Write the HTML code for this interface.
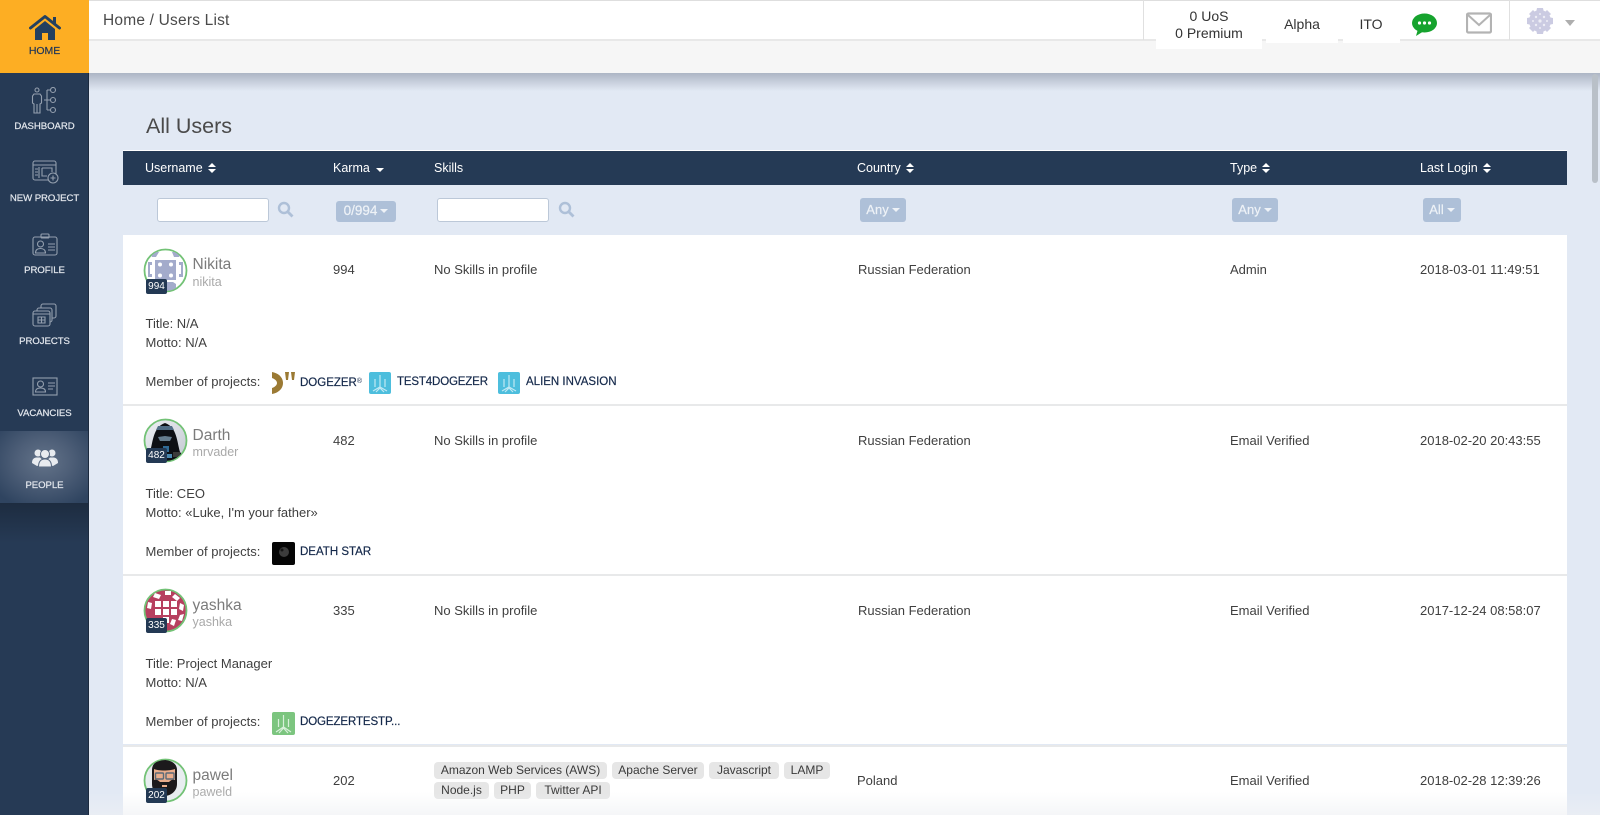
<!DOCTYPE html>
<html lang="en"><head><meta charset="utf-8"><title>Users List</title>
<style>
html,body{margin:0;padding:0;width:1600px;height:815px;overflow:hidden;background:#e2e9f4;font-family:"Liberation Sans",sans-serif;color:#3f3f3f;font-size:13px}
.a{position:absolute}
.t{position:absolute;white-space:nowrap;line-height:16px}
.l{position:absolute;left:0;width:89px;text-align:center;font-size:9.6px;line-height:12px;color:#e4e8ee;letter-spacing:-.05px;white-space:nowrap;-webkit-text-stroke:.2px #e4e8ee}
.th{position:absolute;top:160px;color:#fff;font-size:12.5px;line-height:16px;white-space:nowrap}
.sort{display:inline-block;vertical-align:-1px;margin-left:5px;width:8px;height:10px}
.row{position:absolute;left:123px;width:1444px;height:168px;background:#fff}
.sep{position:absolute;left:123px;width:1444px;height:2px;background:#e8e9ea}
.inp{position:absolute;top:198px;width:110px;height:22px;background:#fff;border:1px solid #bcc8d8;border-radius:3px}
.dd{position:absolute;background:#aec0d8;border-radius:3px;color:#eef2f7;font-size:13px;line-height:23px;text-align:center;height:24px;top:198px;-webkit-text-stroke:.2px #eef2f7}
.dd i{display:inline-block;width:0;height:0;border:4px solid transparent;border-top-color:#eef2f7;border-bottom:0;vertical-align:2px;margin-left:3px}
.tag{position:absolute;height:17px;background:#e6e6e6;border-radius:4px;font-size:12px;line-height:17px;text-align:center;color:#3a3a3a;white-space:nowrap}
.nm{position:absolute;left:192.500px;font-size:15.5px;line-height:18px;color:#7b7b7b;white-space:nowrap}
.un{position:absolute;left:192.500px;font-size:12.5px;line-height:14px;color:#a9a9a9;white-space:nowrap}
.bd{position:absolute;z-index:3;left:146px;width:21px;height:15px;background:#233954;border-radius:2px;color:#fff;font-size:10px;line-height:15px;text-align:center}
.pn{position:absolute;color:#14284a;font-size:11.5px;line-height:16px;white-space:nowrap;-webkit-text-stroke:.2px #14284a}
.av{z-index:2}
</style></head><body>

<!-- top -->
<div class="a" style="left:89px;top:0;width:1511px;height:73px;background:#f6f6f6"></div>
<div class="a" style="left:89px;top:0;width:1511px;height:41px;background:#fff;border-top:1px solid #dedede;border-bottom:2px solid #e8e8e8;box-sizing:border-box"></div>
<div class="t" style="left:103px;top:13px;font-size:15.500px;color:#4a4a4a;letter-spacing:.2px">Home&nbsp;/&nbsp;Users List</div>
<div class="a" style="left:1143px;top:0;width:1px;height:40px;background:#e0e0e0"></div>
<div class="a" style="left:1509px;top:0;width:1px;height:40px;background:#e0e0e0"></div>
<div class="a" style="left:1156px;top:38px;width:106px;height:11px;background:#fff"></div>
<div class="a" style="left:1266px;top:38px;width:72px;height:5px;background:#fff"></div>
<div class="a" style="left:1343px;top:38px;width:57px;height:5px;background:#fff"></div>
<div class="t" style="left:1144px;width:130px;text-align:center;top:8px;font-size:14px;color:#333">0 UoS</div>
<div class="t" style="left:1144px;width:130px;text-align:center;top:25px;font-size:14px;color:#333">0 Premium</div>
<div class="t" style="left:1262px;width:80px;text-align:center;top:16px;font-size:14px;color:#333">Alpha</div>
<div class="t" style="left:1341px;width:60px;text-align:center;top:16px;font-size:14px;color:#333">ITO</div>
<svg class="a" style="left:1411px;top:13px" width="27" height="24" viewBox="0 0 27 24"><ellipse cx="13.5" cy="10" rx="12.5" ry="9.5" fill="#16a32e"/><path d="M7 16L5 23L13 18Z" fill="#16a32e"/><circle cx="8.5" cy="10" r="1.6" fill="#fff"/><circle cx="13.5" cy="10" r="1.6" fill="#fff"/><circle cx="18.5" cy="10" r="1.6" fill="#fff"/></svg>
<svg class="a" style="left:1466px;top:12px" width="26" height="22" viewBox="0 0 26 22"><rect x="1" y="1.500" width="24" height="19" rx="1.5" fill="#fff" stroke="#b3b3b3" stroke-width="2.200"/><path d="M2 3L13 13L24 3" fill="none" stroke="#b3b3b3" stroke-width="2"/></svg>
<svg class="a" style="left:1526px;top:7px" width="28" height="28" viewBox="0 0 28 28"><g fill="#cbcbe2"><circle cx="14" cy="14" r="11"/><path d="M11 1h6l1 5h-8z"/><path d="M11 27h6l1-5h-8z"/><path d="M1 11v6l5 1v-8z"/><path d="M27 11v6l-5 1v-8z"/><path d="M3 7l4-4 4 4-4 4z"/><path d="M25 7l-4-4-4 4 4 4z"/><path d="M3 21l4 4 4-4-4-4z"/><path d="M25 21l-4 4-4-4 4-4z"/></g><g fill="#eeeef6"><circle cx="10" cy="10" r="1.200"/><circle cx="18" cy="10" r="1.200"/><circle cx="10" cy="18" r="1.200"/><circle cx="18" cy="18" r="1.200"/><circle cx="14" cy="14" r="1.600"/><circle cx="14" cy="7" r="1"/><circle cx="14" cy="21" r="1"/><circle cx="7" cy="14" r="1"/><circle cx="21" cy="14" r="1"/></g></svg>
<div class="a" style="left:1565px;top:20px;width:0;height:0;border:5px solid transparent;border-top:6px solid #aeaeae;border-bottom:0"></div>

<!-- sidebar -->
<div class="a" style="left:0;top:73px;width:89px;height:742px;background:#263a55;border-right:1px solid #1c2a3e;box-sizing:border-box"></div>
<div class="a" style="left:0;top:0;width:89px;height:73px;background:#fdae23"></div>
<svg class="a" style="left:29px;top:14px" width="32" height="27" viewBox="0 0 32 27"><path d="M1.5 14L16 2.5L30.500 14" fill="none" stroke="#24405f" stroke-width="3" stroke-linecap="round" stroke-linejoin="round"/><path d="M24 3h3v7l-3-2.500z" fill="#24405f"/><path d="M6 15L16 7l10 8v11h-7v-7h-6v7H6z" fill="#24405f"/></svg>
<div class="l" style="top:45px;color:#1f3557;font-size:10.5px;-webkit-text-stroke:.2px #1f3557">HOME</div>

<svg class="a" style="left:31px;top:87px" width="28" height="28" viewBox="0 0 28 28" fill="none" stroke="#949fae" stroke-width="1.100"><circle cx="6" cy="3" r="2"/><path d="M3 7h6l1.500 2v7l-1.500 1v9H3v-9l-1.500-1V9z"/><path d="M6 17v9"/><path d="M13 13h3M16 3v20M16 3h3M16 13h3M16 23h3"/><circle cx="22" cy="3" r="2.500"/><circle cx="22" cy="13" r="2.500"/><circle cx="22" cy="23" r="2.500"/></svg>
<div class="l" style="top:121px">DASHBOARD</div>

<svg class="a" style="left:32px;top:159px" width="28" height="26" viewBox="0 0 28 26" fill="none" stroke="#949fae" stroke-width="1.100"><rect x="1" y="2" width="23" height="19" rx="2"/><path d="M1 6h23M7 8v11M3 10h3M3 13h3M3 16h3M10 9h10v4M10 9v8h5"/><circle cx="21" cy="19" r="5" fill="#263a55"/><path d="M21 16.500v5M18.500 19h5"/></svg>
<div class="l" style="top:193px">NEW PROJECT</div>

<svg class="a" style="left:32px;top:233px" width="26" height="24" viewBox="0 0 26 24" fill="none" stroke="#949fae" stroke-width="1.100"><rect x="1" y="4" width="24" height="18" rx="2"/><rect x="9" y="1" width="8" height="4" rx="1"/><circle cx="8.500" cy="11" r="3"/><path d="M3.500 20c0-3 2-4.500 5-4.500s5 1.500 5 4.500z"/><path d="M16 11h7M16 14h7M16 17h7"/></svg>
<div class="l" style="top:265px">PROFILE</div>

<svg class="a" style="left:32px;top:302px" width="26" height="26" viewBox="0 0 26 26" fill="none" stroke="#949fae" stroke-width="1.100"><rect x="9" y="2" width="15" height="14" rx="2"/><rect x="5" y="6" width="15" height="14" rx="2" fill="#263a55"/><rect x="1" y="9" width="17" height="15" rx="2" fill="#263a55"/><path d="M1 12h17M6 15h7v6H6zM9.500 15v6M6 18h7"/></svg>
<div class="l" style="top:336px">PROJECTS</div>

<svg class="a" style="left:32px;top:377px" width="26" height="20" viewBox="0 0 26 20" fill="none" stroke="#949fae" stroke-width="1.100"><rect x="1" y="1" width="24" height="17"/><circle cx="8.500" cy="7" r="3"/><path d="M3.500 15c0-3 2-4 5-4s5 1 5 4z"/><path d="M16 6h7M16 9h7M16 12h5"/></svg>
<div class="l" style="top:408px">VACANCIES</div>

<div class="a" style="left:0;top:431px;width:88px;height:72px;background:radial-gradient(ellipse 60px 50px at 44px 30px,#637389 0%,#4e5f78 45%,#2f4460 100%)"></div>
<div class="a" style="left:0;top:503px;width:88px;height:40px;background:linear-gradient(#1d2c40,#263a55)"></div>
<svg class="a" style="left:32px;top:448px" width="26" height="19" viewBox="0 0 26 19" fill="#e8ebef"><circle cx="6" cy="5" r="3.500"/><circle cx="20" cy="5" r="3.500"/><path d="M0 15c0-4 2-5 4-5.500h4l3 3V16L5 18z"/><path d="M26 15c0-4-2-5-4-5.500h-4l-3 3V16l6 2z"/><circle cx="13" cy="6" r="4.500" stroke="#56677f" stroke-width="1"/><path d="M6.500 19c0-5 2-8 6.500-8s6.500 3 6.500 8z" stroke="#56677f" stroke-width="1"/></svg>
<div class="l" style="top:480px">PEOPLE</div>

<!-- shadow below top -->
<div class="a" style="left:89px;top:73px;width:1511px;height:18px;background:linear-gradient(rgba(120,130,150,.5),rgba(120,130,150,0))"></div>

<!-- scrollbar -->
<div class="a" style="left:1592px;top:74px;width:6px;height:109px;background:#b9c0c8;border-radius:3px"></div>

<div class="t" style="left:146px;top:113px;font-size:21.500px;line-height:26px;color:#4a4a4a">All Users</div>

<!-- table header -->
<div class="a" style="left:123px;top:150px;width:1444px;height:35px;background:#253a55;border-top:1px solid #fff;box-sizing:border-box"></div>
<div class="th" style="left:145px">Username<svg class="sort" viewBox="0 0 8 10"><path d="M4 0L8 4H0zM4 10L0 6H8z" fill="#fff"/></svg></div>
<div class="th" style="left:333px">Karma<svg class="sort" style="margin-left:6px" viewBox="0 0 8 10"><path d="M4 9L0 5H8z" fill="#fff"/></svg></div>
<div class="th" style="left:434px">Skills</div>
<div class="th" style="left:857px">Country<svg class="sort" viewBox="0 0 8 10"><path d="M4 0L8 4H0zM4 10L0 6H8z" fill="#fff"/></svg></div>
<div class="th" style="left:1230px">Type<svg class="sort" viewBox="0 0 8 10"><path d="M4 0L8 4H0zM4 10L0 6H8z" fill="#fff"/></svg></div>
<div class="th" style="left:1420px">Last Login<svg class="sort" viewBox="0 0 8 10"><path d="M4 0L8 4H0zM4 10L0 6H8z" fill="#fff"/></svg></div>

<!-- filters -->
<div class="inp" style="left:157px"></div>
<svg class="a" style="left:277px;top:201px" width="17" height="17" viewBox="0 0 17 17" fill="none" stroke="#aec0d8"><circle cx="7" cy="7" r="5" stroke-width="2.400"/><path d="M11 11L15.500 15.500" stroke-width="2.800"/></svg>
<div class="dd" style="left:336px;width:60px;top:201px;height:21px;line-height:20px;font-size:13.500px">0/994<i></i></div>
<div class="inp" style="left:437px"></div>
<svg class="a" style="left:558px;top:201px" width="17" height="17" viewBox="0 0 17 17" fill="none" stroke="#aec0d8"><circle cx="7" cy="7" r="5" stroke-width="2.400"/><path d="M11 11L15.500 15.500" stroke-width="2.800"/></svg>
<div class="dd" style="left:860px;width:46px">Any<i></i></div>
<div class="dd" style="left:1232px;width:46px">Any<i></i></div>
<div class="dd" style="left:1423px;width:38px">All<i></i></div>

<!-- rows -->
<div class="row" style="top:235px;height:169px"></div><div class="sep" style="top:404px"></div>
<div class="row" style="top:406px"></div><div class="sep" style="top:574px"></div>
<div class="row" style="top:576px"></div><div class="sep" style="top:745px"></div>
<div class="row" style="top:747px;height:68px"></div>

<!-- row 1 -->
<svg class="a av" style="left:143px;top:248px" width="45" height="45" viewBox="0 0 45 45"><defs><clipPath id="c"><circle cx="22.500" cy="22.500" r="20.500"/></clipPath></defs><circle cx="22.500" cy="22.500" r="21" fill="#fff" stroke="#73c276" stroke-width="1.800"/><g clip-path="url(#c)" fill="#a3abcb"><rect x="12" y="12" width="21" height="20"/><path d="M7 4h9l-3 5H9zM29 4h9l-2 5h-5zM5 14h4v3H7v9h2v3H5zM40 14h-4v3h2v9h-2v3h4zM12 36l3-2h15l3 2v7H12z"/></g><g fill="#fff"><circle cx="17" cy="16.500" r="2"/><circle cx="28" cy="16.500" r="2"/><circle cx="17" cy="27.500" r="2"/><circle cx="28" cy="27.500" r="2"/></g></svg>
<div class="bd" style="top:279px">994</div>
<div class="nm" style="top:256px">Nikita</div>
<div class="un" style="top:275px">nikita</div>
<div class="t" style="left:333px;top:262px">994</div>
<div class="t" style="left:434px;top:262px">No Skills in profile</div>
<div class="t" style="left:858px;top:262px">Russian Federation</div>
<div class="t" style="left:1230px;top:262px">Admin</div>
<div class="t" style="left:1420px;top:262px">2018-03-01 11:49:51</div>
<div class="t" style="left:145.500px;top:316px">Title: N/A</div>
<div class="t" style="left:145.500px;top:335px">Motto: N/A</div>
<div class="t" style="left:145.500px;top:374px">Member of projects:</div>
<svg class="a" style="left:272px;top:372px" width="24" height="23" viewBox="0 0 24 23"><path d="M0 0C6 1 11 5 11 11C11 17 6 21 0 22L0 16C3 15 5 13 5 11C5 9 3 7 0 6Z" fill="#9b7a34"/><path d="M13 0h4l-1 8h-2zM19 0h4l-1 8h-2z" fill="#9b7a34"/></svg>
<div class="pn" style="left:300px;top:374px">DOGEZER<span style="font-size:7px;vertical-align:3px;-webkit-text-stroke:0">®</span></div>
<svg class="a" style="left:369px;top:372px" width="22" height="22" viewBox="0 0 22 22"><rect width="22" height="22" rx="2" fill="#4dbedd"/><g fill="none" stroke="#bfe9f4" stroke-width="1.200"><path d="M11 3v12M6 7v8M16 7v8M4 19l7-4 7 4M7 20l4-4 4 4"/></g></svg>
<div class="pn" style="left:397px;top:374px;letter-spacing:-.15px">TEST4DOGEZER</div>
<svg class="a" style="left:498px;top:372px" width="22" height="22" viewBox="0 0 22 22"><rect width="22" height="22" rx="2" fill="#4dbedd"/><g fill="none" stroke="#bfe9f4" stroke-width="1.200"><path d="M11 3v12M6 7v8M16 7v8M4 19l7-4 7 4M7 20l4-4 4 4"/></g></svg>
<div class="pn" style="left:526px;top:374px">ALIEN INVASION</div>

<!-- row 2 -->
<svg class="a av" style="left:143px;top:418px" width="45" height="45" viewBox="0 0 45 45"><defs><clipPath id="c2"><circle cx="22.500" cy="22.500" r="20.500"/></clipPath><linearGradient id="g2" x1="0" y1="0" x2="1" y2="1"><stop offset="0" stop-color="#eef0f4"/><stop offset="1" stop-color="#c3c8d2"/></linearGradient></defs><circle cx="22.500" cy="22.500" r="21" fill="url(#g2)" stroke="#73c276" stroke-width="1.800"/><g clip-path="url(#c2)"><path d="M7 34C10 24 10 9 22 5C34 9 34 24 37 34L45 45H0z" fill="#0d0f14"/><path d="M15 8h14l2 4H13z" fill="#4f6c84"/><path d="M15 19l7-1 7 1-2 4h-10z" fill="#657c8e"/><path d="M20 28h6v6h-6z" fill="#2f6a96"/><path d="M30 34h7v5h-7z" fill="#3a3a3a"/><path d="M24 36h5v4h-5z" fill="#4a88b0"/></g></svg>
<div class="bd" style="top:448px">482</div>
<div class="nm" style="top:427px">Darth</div>
<div class="un" style="top:445px">mrvader</div>
<div class="t" style="left:333px;top:433px">482</div>
<div class="t" style="left:434px;top:433px">No Skills in profile</div>
<div class="t" style="left:858px;top:433px">Russian Federation</div>
<div class="t" style="left:1230px;top:433px">Email Verified</div>
<div class="t" style="left:1420px;top:433px">2018-02-20 20:43:55</div>
<div class="t" style="left:145.500px;top:486px">Title: CEO</div>
<div class="t" style="left:145.500px;top:505px">Motto: «Luke, I'm your father»</div>
<div class="t" style="left:145.500px;top:544px">Member of projects:</div>
<svg class="a" style="left:272px;top:542px" width="23" height="23" viewBox="0 0 23 23"><rect width="23" height="23" rx="2" fill="#050505"/><circle cx="12" cy="10" r="5" fill="#3c3c3c"/><circle cx="10" cy="8" r="1.500" fill="#151515"/></svg>
<div class="pn" style="left:300px;top:544px">DEATH STAR</div>

<!-- row 3 -->
<svg class="a av" style="left:143px;top:588px" width="45" height="45" viewBox="0 0 45 45"><defs><clipPath id="c3"><circle cx="22.500" cy="22.500" r="20.500"/></clipPath></defs><circle cx="22.500" cy="22.500" r="21" fill="#b73f5f" stroke="#73c276" stroke-width="1.800"/><g clip-path="url(#c3)" fill="#fff"><rect x="12" y="13" width="6" height="6"/><rect x="20" y="13" width="6" height="6"/><rect x="28" y="13" width="6" height="6"/><rect x="12" y="21" width="6" height="6"/><rect x="20" y="21" width="6" height="6"/><rect x="28" y="21" width="6" height="6"/><rect x="20" y="29" width="6" height="6"/><path d="M12 5l6 2-2 4-6-2zM22 3h6v4h-6zM32 6l5 4-3 3-5-4zM5 14l4 1-1 6-4-1zM37 15l4 2-1 6-4-2zM37 27l4-1-2 7-4-1zM29 31l4 1-2 6-4-2zM12 37l6-2 1 6-5 1z"/></g></svg>
<div class="bd" style="top:618px">335</div>
<div class="nm" style="top:597px">yashka</div>
<div class="un" style="top:615px">yashka</div>
<div class="t" style="left:333px;top:603px">335</div>
<div class="t" style="left:434px;top:603px">No Skills in profile</div>
<div class="t" style="left:858px;top:603px">Russian Federation</div>
<div class="t" style="left:1230px;top:603px">Email Verified</div>
<div class="t" style="left:1420px;top:603px">2017-12-24 08:58:07</div>
<div class="t" style="left:145.500px;top:656px">Title: Project Manager</div>
<div class="t" style="left:145.500px;top:675px">Motto: N/A</div>
<div class="t" style="left:145.500px;top:714px">Member of projects:</div>
<svg class="a" style="left:272px;top:712px" width="23" height="23" viewBox="0 0 23 23"><rect width="23" height="23" rx="2" fill="#7cc57f"/><g fill="none" stroke="#d8f0da" stroke-width="1.200"><path d="M11.500 3v12M6.500 7v8M16.500 7v8M4 20l7.500-5 7.500 5M7 21l4.500-5 4.500 5"/></g></svg>
<div class="pn" style="left:300px;top:714px;letter-spacing:-.1px">DOGEZERTESTP...</div>

<!-- row 4 -->
<svg class="a av" style="left:143px;top:758px" width="45" height="45" viewBox="0 0 45 45"><defs><clipPath id="c4"><circle cx="22.500" cy="22.500" r="20.500"/></clipPath></defs><circle cx="22.500" cy="22.500" r="21" fill="#e8edf0" stroke="#73c276" stroke-width="1.800"/><g clip-path="url(#c4)"><path d="M9 12C9 5 15 2 21 2s13 3 13 10v14c0 7-6 12-13 12S9 33 9 26z" fill="#1c1a1c"/><path d="M11 11c4 2 16 2 21 0v11c-2-1-4 0-6 2h-9c-2-2-4-3-6-2z" fill="#e9ad8c"/><rect x="12.500" y="15" width="8" height="6" rx="1" fill="none" stroke="#5a6a78" stroke-width="1.400"/><rect x="23" y="15" width="8" height="6" rx="1" fill="none" stroke="#5a6a78" stroke-width="1.400"/><path d="M19 27h5v2h-5z" fill="#e9ad8c"/></g></svg>
<div class="bd" style="top:788px">202</div>
<div class="nm" style="top:767px">pawel</div>
<div class="un" style="top:785px">paweld</div>
<div class="t" style="left:333px;top:773px">202</div>
<div class="tag" style="left:434px;top:762px;width:173px">Amazon Web Services (AWS)</div>
<div class="tag" style="left:612px;top:762px;width:92px">Apache Server</div>
<div class="tag" style="left:709px;top:762px;width:70px">Javascript</div>
<div class="tag" style="left:784px;top:762px;width:46px">LAMP</div>
<div class="tag" style="left:434px;top:782px;width:55px">Node.js</div>
<div class="tag" style="left:494px;top:782px;width:37px">PHP</div>
<div class="tag" style="left:536px;top:782px;width:74px">Twitter API</div>
<div class="t" style="left:857px;top:773px">Poland</div>
<div class="t" style="left:1230px;top:773px">Email Verified</div>
<div class="t" style="left:1420px;top:773px">2018-02-28 12:39:26</div>

<!-- bottom fade -->
<div class="a" style="left:89px;top:792px;width:1511px;height:23px;background:linear-gradient(rgba(242,243,245,0),rgba(238,240,243,.6))"></div>
</body></html>
